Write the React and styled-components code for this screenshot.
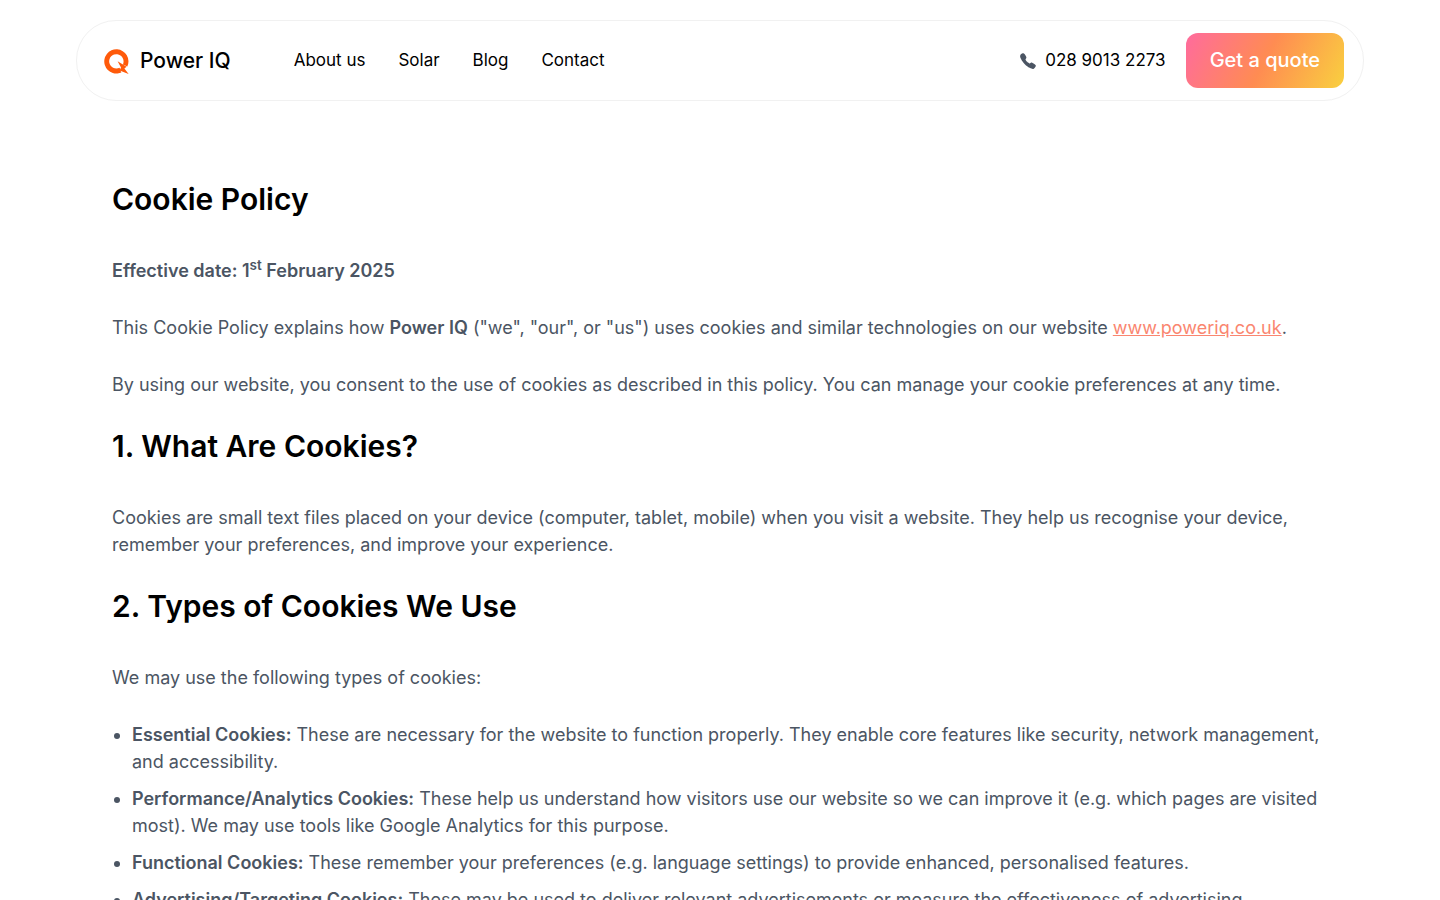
import { IoCall } from 'react-icons/io5';
import styled, { createGlobalStyle } from 'styled-components';

const GlobalStyles = createGlobalStyle`
* {
    box-sizing: border-box;
}
body {
    margin: 0;
    background-color: #fff;
    color: #4b5563;
    font-family: Inter, "Liberation Sans", sans-serif;
    font-size: 18px;
    line-height: 27px;
}
`;

const Header = styled.header`
display: flex;
align-items: center;
justify-content: space-between;
margin: 20px 76px 0;
padding: 12px 19px 12px 27px;
border: 1px solid #f1f1f1;
border-radius: 40px;
background-color: #fff;
`;

const HeaderGroup = styled.div`
display: flex;
align-items: center;
gap: ${({ $gap }) => $gap}px;
`;

const Logo = styled.a`
display: flex;
align-items: center;
gap: 10px;
color: #000;
font-size: 21px;
font-weight: 500;
text-decoration: none;
`;

const Nav = styled.nav`
display: flex;
gap: 33px;
`;

const HeaderLink = styled.a`
display: flex;
align-items: center;
gap: 8px;
color: #000;
font-size: 17px;
text-decoration: none;
`;

const PhoneIcon = styled(IoCall)`
color: #4b5563;
font-size: 18px;
`;

const QuoteButton = styled.button`
padding: 12px 24px 13px;
border: 0;
border-radius: 12px;
background: linear-gradient(117deg, #ff6b9d 0%, #ff8c52 50%, #f9d03f 100%);
color: #fff;
font-family: inherit;
font-size: 20px;
font-weight: 500;
line-height: 30px;
cursor: pointer;
`;

const Content = styled.main`
padding: 80px 112px;
`;

const Heading = styled.h2`
margin: 0 0 40px;
color: #000;
font-size: 30px;
font-weight: 600;
line-height: 36px;
`;

const Paragraph = styled.p`
margin: 0 0 30px;

sup {
  font-size: 75%;
  line-height: 0;
}
`;

const Bold = styled.strong`
font-weight: 600;
`;

const TextLink = styled.a`
color: #fa8670;
text-decoration: underline;
`;

const List = styled.ul`
margin: 0;
padding-left: 20px;
`;

const Item = styled.li`
margin-bottom: 10px;
`;

const navLinks = ['About us', 'Solar', 'Blog', 'Contact'];

const cookieTypes = [
  {
    name: 'Essential Cookies:',
    text: 'These are necessary for the website to function properly. They enable core features like security, network management, and accessibility.',
  },
  {
    name: 'Performance/Analytics Cookies:',
    text: 'These help us understand how visitors use our website so we can improve it (e.g. which pages are visited most). We may use tools like Google Analytics for this purpose.',
  },
  {
    name: 'Functional Cookies:',
    text: 'These remember your preferences (e.g. language settings) to provide enhanced, personalised features.',
  },
  {
    name: 'Advertising/Targeting Cookies:',
    text: 'These may be used to deliver relevant advertisements or measure the effectiveness of advertising campaigns.',
  },
];

const LogoMark = () => (
  <svg width="26" height="26" viewBox="0 0 26 26" aria-hidden="true">
    <path
      d="M19.9 22.9A12.1 12.1 0 1 1 23.3 18.6L18.9 16.4A7.2 7.2 0 1 0 15.6 19.8L17.2 24.4Z"
      fill="#ff5a0a"
    />
    <path d="M13.6 13.2L22.6 18.8L20.4 20.4L24.6 26L15.6 22.6L17 19.4Z" fill="#ff5a0a" />
  </svg>
);

const App = () => {
  return (
    <>
      <GlobalStyles />
      <Header>
        <HeaderGroup $gap={63}>
          <Logo href="#">
            <LogoMark />
            Power IQ
          </Logo>
          <Nav>
            {navLinks.map((link) => (
              <HeaderLink key={link} href="#">{link}</HeaderLink>
            ))}
          </Nav>
        </HeaderGroup>
        <HeaderGroup $gap={20}>
          <HeaderLink href="tel:02890132273">
            <PhoneIcon aria-hidden="true" />
            028 9013 2273
          </HeaderLink>
          <QuoteButton>Get a quote</QuoteButton>
        </HeaderGroup>
      </Header>
      <Content>
        <Heading as="h1">Cookie Policy</Heading>
        <Paragraph>
          <Bold>Effective date: 1<sup>st</sup> February 2025</Bold>
        </Paragraph>
        <Paragraph>
          This Cookie Policy explains how <Bold>Power IQ</Bold> ("we", "our", or "us") uses cookies and similar
          technologies on our website <TextLink href="#">www.poweriq.co.uk</TextLink>.
        </Paragraph>
        <Paragraph>
          By using our website, you consent to the use of cookies as described in this policy. You can manage your
          cookie preferences at any time.
        </Paragraph>
        <Heading>1. What Are Cookies?</Heading>
        <Paragraph>
          Cookies are small text files placed on your device (computer, tablet, mobile) when you visit a website. They
          help us recognise your device, remember your preferences, and improve your experience.
        </Paragraph>
        <Heading>2. Types of Cookies We Use</Heading>
        <Paragraph>We may use the following types of cookies:</Paragraph>
        <List>
          {cookieTypes.map(({ name, text }) => (
            <Item key={name}>
              <Bold>{name}</Bold> {text}
            </Item>
          ))}
        </List>
      </Content>
    </>
  );
};

export default App;
